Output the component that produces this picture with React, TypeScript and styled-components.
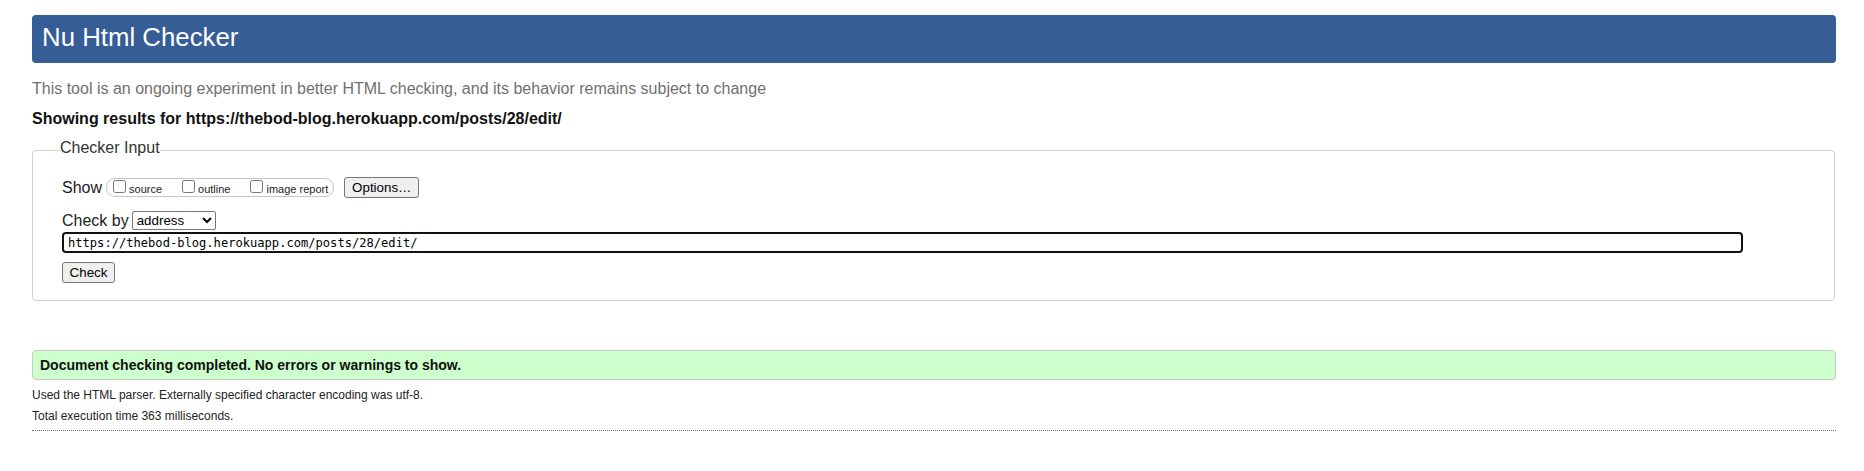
import React from 'react';
import styled, { createGlobalStyle } from 'styled-components';

const GlobalStyle = createGlobalStyle`
  html, body { margin: 0; padding: 0; background: #fff; }
  body { font-family: "Liberation Sans", Arial, sans-serif; color: #111; }
`;

const Page = styled.div`
  padding: 15px 28px 0 32px;
`;

const Header = styled.h1`
  margin: 0;
  height: 48px;
  box-sizing: border-box;
  padding: 0 0 3px 10px;
  display: flex;
  align-items: center;
  background: #365d95;
  border-radius: 4px;
  color: #fff;
  font-size: 25.8px;
  font-weight: normal;
`;

const Intro = styled.p`
  margin: 17px 0 0;
  font-size: 16px;
  color: #707070;
`;

const Showing = styled.p`
  margin: 12px 0 0;
  font-size: 16px;
  font-weight: bold;
  color: #111;
`;

const Fieldset = styled.fieldset`
  margin: 11px 1px 0 0;
  padding: 15px 0 17px 29px;
  border: 1px solid #cfcfcf;
  border-radius: 4px;
  min-width: 0;
`;

const Legend = styled.legend`
  padding: 0 0 5px;
  margin-left: -2px;
  font-size: 16px;
  color: #333;
`;

const Row = styled.div<{ $top?: number }>`
  display: flex;
  align-items: center;
  margin-top: ${(p) => p.$top ?? 0}px;
`;

const Label = styled.span`
  font-size: 16px;
  color: #222;
`;

const Pill = styled.span`
  display: inline-flex;
  align-items: center;
  box-sizing: border-box;
  height: 19px;
  margin-left: 4px;
  padding: 0 5px 0 6px;
  border: 1px solid #c6c6c6;
  border-radius: 9px;
`;

const Item = styled.label<{ $last?: boolean }>`
  display: inline-flex;
  align-items: baseline;
  font-size: 11px;
  color: #222;
  margin-right: ${(p) => (p.$last ? 0 : 20)}px;
`;

const Box = styled.input`
  width: 13px;
  height: 13px;
  margin: 0 3px 0 0;
`;

const Button = styled.button<{ $w: number; $ml?: number }>`
  box-sizing: border-box;
  width: ${(p) => p.$w}px;
  height: 21px;
  margin-left: ${(p) => p.$ml ?? 0}px;
  padding: 0 6px;
  font-family: "Liberation Sans", Arial, sans-serif;
  font-size: 13.33px;
  color: #000;
  background: #efefef;
  border: 1px solid #767676;
  border-radius: 3px;
`;

const Select = styled.select`
  box-sizing: border-box;
  width: 84px;
  height: 19px;
  margin-left: 3px;
  font-family: "Liberation Sans", Arial, sans-serif;
  font-size: 13.33px;
  color: #000;
  background: #fff;
  border: 1px solid #767676;
  border-radius: 2px;
`;

const UrlInput = styled.input`
  display: block;
  box-sizing: border-box;
  width: 1681px;
  height: 21px;
  margin-top: 2px;
  padding: 0 4px;
  font-family: "DejaVu Sans Mono", "Liberation Mono", monospace;
  font-size: 12.1px;
  color: #000;
  background: #fff;
  border: 2px solid #111;
  border-radius: 4px;
  outline: none;
`;

const Success = styled.div`
  box-sizing: border-box;
  height: 30px;
  margin-top: 49px;
  padding-left: 7px;
  display: flex;
  align-items: center;
  background: #ccffcc;
  border: 1px solid #c8c8c8;
  border-radius: 4px;
  font-size: 14px;
  font-weight: bold;
  color: #111;
`;

const Note = styled.p<{ $top: number }>`
  margin: ${(p) => p.$top}px 0 0;
  font-size: 12px;
  color: #222;
`;

const Rule = styled.div`
  margin-top: 7px;
  border-top: 1px dotted #777;
`;

export default function App() {
  return (
    <>
      <GlobalStyle />
      <Page>
        <Header>Nu Html Checker</Header>
        <Intro>
          This tool is an ongoing experiment in better HTML checking, and its behavior remains subject to change
        </Intro>
        <Showing>Showing results for https://thebod-blog.herokuapp.com/posts/28/edit/</Showing>
        <Fieldset>
          <Legend>Checker Input</Legend>
          <Row>
            <Label>Show</Label>
            <Pill>
              <Item>
                <Box type="checkbox" />
                source
              </Item>
              <Item>
                <Box type="checkbox" />
                outline
              </Item>
              <Item $last>
                <Box type="checkbox" />
                image report
              </Item>
            </Pill>
            <Button $w={75} $ml={10}>Options…</Button>
          </Row>
          <Row $top={13}>
            <Label>Check by</Label>
            <Select defaultValue="address">
              <option value="address">address</option>
              <option value="file">file upload</option>
              <option value="text">text input</option>
            </Select>
          </Row>
          <UrlInput type="text" defaultValue="https://thebod-blog.herokuapp.com/posts/28/edit/" />
          <Row $top={9}>
            <Button $w={53}>Check</Button>
          </Row>
        </Fieldset>
        <Success>Document checking completed. No errors or warnings to show.</Success>
        <Note $top={8}>Used the HTML parser. Externally specified character encoding was utf-8.</Note>
        <Note $top={7}>Total execution time 363 milliseconds.</Note>
        <Rule />
      </Page>
    </>
  );
}
